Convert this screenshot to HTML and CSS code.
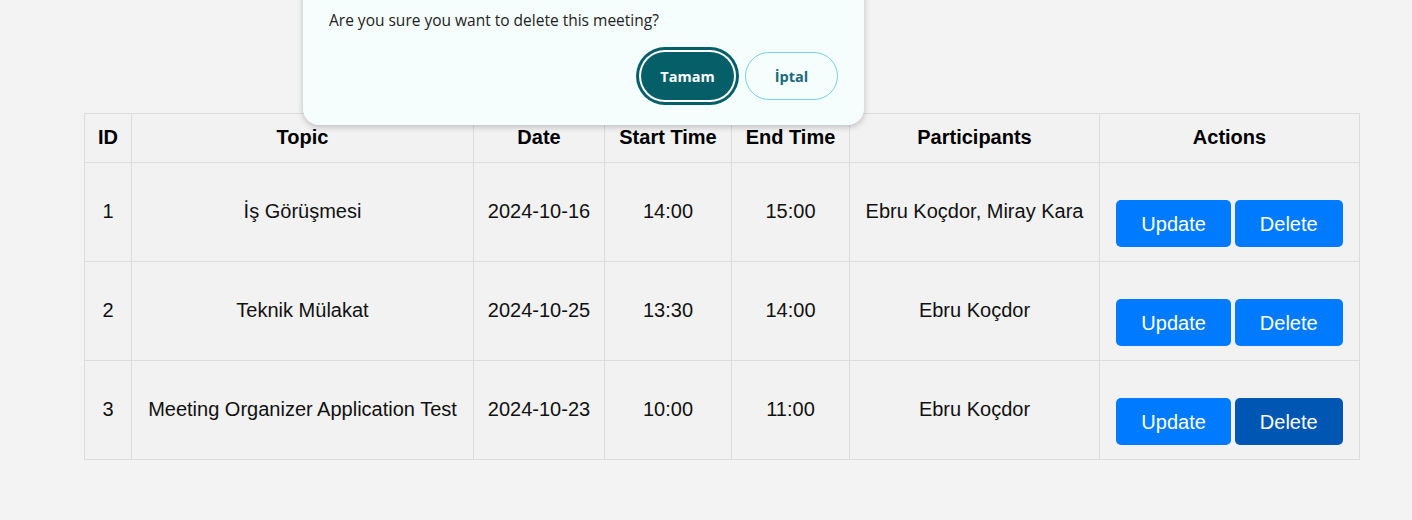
FILE: index.html
```html
<!DOCTYPE html>
<html lang="tr">
<head>
<meta charset="utf-8">
<title>Meetings</title>
<link rel="stylesheet" href="styles.css">
</head>
<body>
<div class="page">
  <table class="meetings">
    <colgroup>
      <col class="c-id"><col class="c-topic"><col class="c-date"><col class="c-start"><col class="c-end"><col class="c-part"><col class="c-act">
    </colgroup>
    <thead>
      <tr><th>ID</th><th>Topic</th><th>Date</th><th>Start Time</th><th>End Time</th><th>Participants</th><th>Actions</th></tr>
    </thead>
    <tbody>
      <tr><td>1</td><td>İş Görüşmesi</td><td>2024-10-16</td><td>14:00</td><td>15:00</td><td>Ebru Koçdor, Miray Kara</td>
        <td class="actions"><button class="btn">Update</button><button class="btn">Delete</button></td></tr>
      <tr><td>2</td><td>Teknik Mülakat</td><td>2024-10-25</td><td>13:30</td><td>14:00</td><td>Ebru Koçdor</td>
        <td class="actions"><button class="btn">Update</button><button class="btn">Delete</button></td></tr>
      <tr><td>3</td><td>Meeting Organizer Application Test</td><td>2024-10-23</td><td>10:00</td><td>11:00</td><td>Ebru Koçdor</td>
        <td class="actions"><button class="btn">Update</button><button class="btn btn-hover">Delete</button></td></tr>
    </tbody>
  </table>
</div>
<div class="dialog">
  <p class="dialog-text">Are you sure you want to delete this meeting?</p>
  <div class="dialog-actions">
    <button class="dbtn dbtn-ok">Tamam</button>
    <button class="dbtn dbtn-cancel">İptal</button>
  </div>
</div>
</body>
</html>
```
FILE: styles.css
```css
html, body { margin: 0; padding: 0; }
body {
  background: #f3f3f3;
  font-family: "Liberation Sans", Arial, sans-serif;
  color: #111;
  width: 1412px;
  height: 520px;
  overflow: hidden;
  position: relative;
}
.page {
  padding: 113px 0 0 84px;
}
.meetings {
  border-collapse: collapse;
  table-layout: fixed;
  width: 1276px;
  background: #f2f2f2;
  font-size: 20px;
}
.c-id { width: 47px; }
.c-topic { width: 342px; }
.c-date { width: 131px; }
.c-start { width: 127px; }
.c-end { width: 118px; }
.c-part { width: 250px; }
.c-act { width: 260px; }
.meetings th, .meetings td {
  border: 1px solid #dcdcdc;
  text-align: center;
  vertical-align: middle;
  padding: 0 0 2px 0;
  white-space: nowrap;
}
.meetings th {
  height: 46px;
  font-weight: bold;
  color: #000;
}
.meetings td { height: 96px; }
.meetings td.actions {
  padding: 37px 0 14px 0;
  height: 47px;
}
.btn {
  font-family: "Liberation Sans", Arial, sans-serif;
  font-size: 20px;
  line-height: 23px;
  padding: 13px 25px 11px;
  margin: 0 2px;
  border: none;
  border-radius: 5px;
  background: #007bff;
  color: #fff;
  vertical-align: top;
}
.btn-hover { background: #0056b3; }

.dialog {
  position: absolute;
  left: 303px;
  top: -40px;
  width: 561px;
  box-sizing: border-box;
  padding: 50px 26px 25px 26px;
  background: #f6fdfd;
  border-radius: 16px;
  box-shadow: 0 2px 6px rgba(0,0,0,0.22);
  font-family: "Open Sans", "Noto Sans", sans-serif;
}
.dialog-text {
  margin: 0;
  font-size: 15.5px;
  line-height: 20px;
  color: #222;
}
.dialog-actions {
  display: flex;
  justify-content: flex-end;
  gap: 11px;
  margin-top: 22px;
}
.dbtn {
  font-family: "Open Sans", "Noto Sans", sans-serif;
  font-size: 14.5px;
  font-weight: 700;
  height: 48px;
  width: 93px;
  border-radius: 24px;
  cursor: pointer;
}
.dbtn-ok {
  background: #045f69;
  color: #fff;
  border: none;
  box-shadow: 0 0 0 2px #fff, 0 0 0 5px #045f69;
}
.dbtn-cancel {
  background: transparent;
  color: #1b6a79;
  border: 1px solid #78d3e3;
}
```
